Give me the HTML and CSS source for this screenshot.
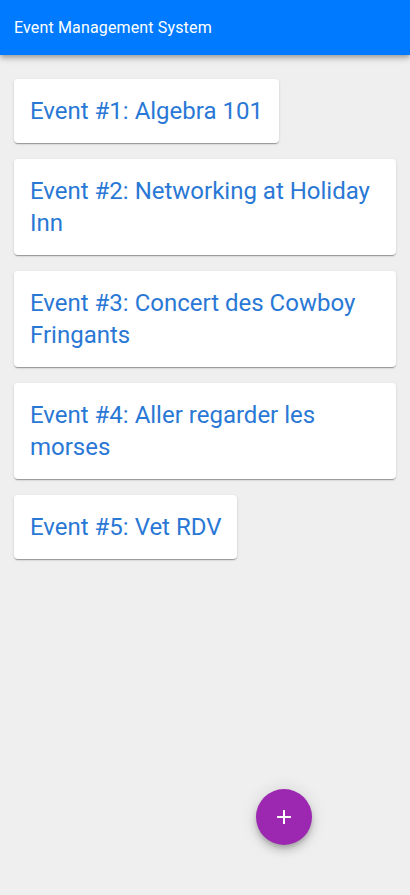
FILE: index.html
```html
<!DOCTYPE html>
<html>
<head>
<meta charset="utf-8">
<link rel="stylesheet" href="styles.css">
</head>
<body>
<header class="appbar"><span class="title">Event Management System</span></header>
<main class="list">
  <div class="card">Event #1: Algebra 101</div>
  <div class="card">Event #2: Networking at Holiday Inn</div>
  <div class="card">Event #3: Concert des Cowboy Fringants</div>
  <div class="card">Event #4: Aller regarder les morses</div>
  <div class="card">Event #5: Vet RDV</div>
</main>
<button class="fab" aria-label="add">
  <svg width="16" height="16" viewBox="0 0 16 16"><path d="M8 1v14M1 8h14" stroke="#fff" stroke-width="2"/></svg>
</button>
</body>
</html>
```
FILE: styles.css
```css
html, body {
  margin: 0;
  padding: 0;
  background: #efefef;
  font-family: Roboto, "Liberation Sans", sans-serif;
  height: 100%;
}
.appbar {
  height: 55px;
  background: #007bff;
  color: #fff;
  display: flex;
  align-items: center;
  padding: 0 14px;
  box-shadow: 0 2px 4px -1px rgba(0,0,0,0.2), 0 4px 5px 0 rgba(0,0,0,0.14), 0 1px 10px 0 rgba(0,0,0,0.12);
  position: relative;
  z-index: 1;
}
.title {
  font-size: 16px;
  line-height: 20px;
  letter-spacing: 0.15px;
}
.list {
  display: flex;
  flex-direction: column;
  align-items: flex-start;
  gap: 16px;
  padding: 24px 14px;
}
.card {
  background: #fff;
  border-radius: 4px;
  padding: 16px;
  font-size: 24px;
  line-height: 32px;
  color: #2a78d5;
  box-shadow: 0 2px 1px -1px rgba(0,0,0,0.2), 0 1px 1px 0 rgba(0,0,0,0.14), 0 1px 3px 0 rgba(0,0,0,0.12);
  max-width: 350px;
}
.fab {
  position: fixed;
  left: 256px;
  top: 789px;
  width: 56px;
  height: 56px;
  border-radius: 50%;
  border: none;
  background: #9c27b0;
  display: flex;
  align-items: center;
  justify-content: center;
  padding: 0;
  box-shadow: 0 3px 5px -1px rgba(0,0,0,0.2), 0 6px 10px 0 rgba(0,0,0,0.14), 0 1px 18px 0 rgba(0,0,0,0.12);
}
```
